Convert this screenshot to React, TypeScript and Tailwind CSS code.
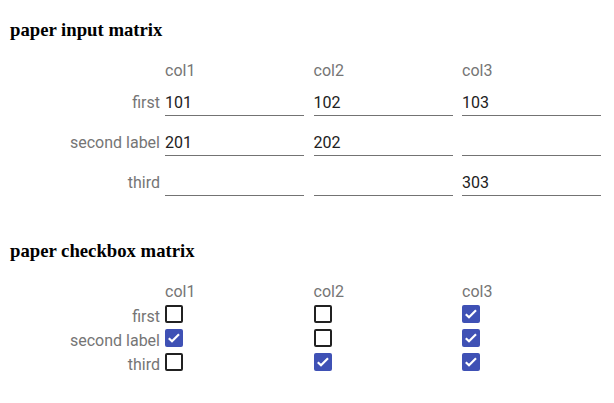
import React from 'react';

const cols = ['col1', 'col2', 'col3'];

const inputRows = [
  { label: 'first', values: ['101', '102', '103'] },
  { label: 'second label', values: ['201', '202', ''] },
  { label: 'third', values: ['', '', '303'] },
];

const checkRows = [
  { label: 'first', values: [false, false, true] },
  { label: 'second label', values: [true, false, true] },
  { label: 'third', values: [false, true, true] },
];

const gridCols = 'grid grid-cols-[157px_148.5px_148.5px_148.5px]';

function Checkbox({ checked }: { checked: boolean }) {
  if (!checked) {
    return <div className="h-[18px] w-[18px] rounded-[2px] border-2 border-[#212121]" />;
  }
  return (
    <div className="flex h-[18px] w-[18px] items-center justify-center rounded-[2px] bg-[#3f51b5]">
      <svg width="18" height="18" viewBox="0 0 18 18" fill="none">
        <path d="M3.8 9.2l3.2 3.1 7-7" stroke="white" strokeWidth="2.2" />
      </svg>
    </div>
  );
}

export default function App() {
  return (
    <div className="px-2 font-['Roboto',sans-serif] text-base">
      {/* Input matrix */}
      <h3 className="mt-[18.72px] mb-[18.72px] ml-[2px] font-['Liberation_Serif',serif] text-[18.72px] leading-[21.5px] font-bold text-black">
        paper input matrix
      </h3>
      <div className={gridCols}>
        <div className="h-[17px]" />
        {cols.map((c) => (
          <div key={c} className="h-[17px] leading-6 text-[#757575]">
            {c}
          </div>
        ))}
        {inputRows.map((row) => (
          <React.Fragment key={row.label}>
            <div className="flex h-10 items-end justify-end pr-[5px] pb-px leading-6 text-[#757575]">
              {row.label}
            </div>
            {row.values.map((v, i) => (
              <div key={i} className="flex h-10 items-end">
                <div className="w-[139px] border-b border-[#737373] leading-6 text-[#212121]">
                  {v || '\u00a0'}
                </div>
              </div>
            ))}
          </React.Fragment>
        ))}
      </div>

      {/* Checkbox matrix */}
      <h3 className="mt-[44px] mb-[19px] ml-[2px] font-['Liberation_Serif',serif] text-[18.72px] leading-[21.5px] font-bold text-black">
        paper checkbox matrix
      </h3>
      <div className={gridCols}>
        <div className="h-[22px]" />
        {cols.map((c) => (
          <div key={c} className="h-[22px] leading-6 text-[#757575]">
            {c}
          </div>
        ))}
        {checkRows.map((row) => (
          <React.Fragment key={row.label}>
            <div className="h-6 pr-[5px] text-right leading-[29px] text-[#757575]">{row.label}</div>
            {row.values.map((v, i) => (
              <div key={i} className="flex h-6 items-center">
                <Checkbox checked={v} />
              </div>
            ))}
          </React.Fragment>
        ))}
      </div>
    </div>
  );
}
